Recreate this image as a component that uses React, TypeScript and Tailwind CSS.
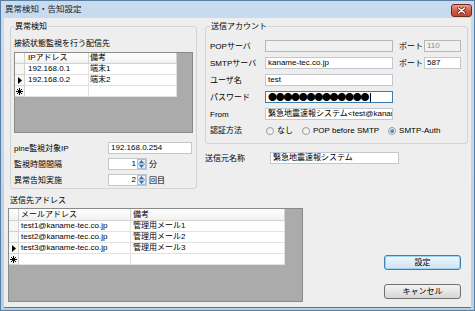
import React from 'react';

const FONT = "font-['Liberation_Sans','Noto_Sans_CJK_JP',sans-serif]";

function TextBox({
  children,
  className = '',
  disabled = false,
  focused = false,
}: {
  children?: React.ReactNode;
  className?: string;
  disabled?: boolean;
  focused?: boolean;
}) {
  const tone = disabled
    ? 'bg-[#f1f1f1] border-[#b7b7b7] text-[#8a8a8a]'
    : focused
      ? 'bg-white border-[#3d7bad]'
      : 'bg-white border-[#c3c8cf]';
  return (
    <div
      className={`h-[12px] flex items-center px-[2px] border text-[8px] leading-[10px] whitespace-nowrap overflow-hidden ${tone} ${className}`}
    >
      {children}
    </div>
  );
}

function Spinner({ value }: { value: string }) {
  return (
    <div className="h-[12px] w-[39px] flex border border-[#c3c8cf] bg-white">
      <div className="flex-1 text-right pr-[1px] text-[8px] leading-[10px]">{value}</div>
      <div className="w-[9px] flex flex-col">
        <div className="h-[5px] flex items-center justify-center border border-[#aac0d8] bg-linear-to-b from-[#f3f8fd] to-[#d6e5f4]">
          <svg width="5" height="3" viewBox="0 0 5 3">
            <polygon points="2.5,0 5,3 0,3" fill="#3e6fa3" />
          </svg>
        </div>
        <div className="h-[5px] flex items-center justify-center border border-[#aac0d8] bg-linear-to-b from-[#f3f8fd] to-[#d6e5f4]">
          <svg width="5" height="3" viewBox="0 0 5 3">
            <polygon points="0,0 5,0 2.5,3" fill="#3e6fa3" />
          </svg>
        </div>
      </div>
    </div>
  );
}

function RowArrow() {
  return (
    <svg width="4" height="7" viewBox="0 0 4 7">
      <polygon points="0,0 4,3.5 0,7" fill="#000" />
    </svg>
  );
}

function NewRowMark() {
  return (
    <svg width="7" height="7" viewBox="0 0 7 7" stroke="#000" strokeWidth="1">
      <line x1="3.5" y1="0" x2="3.5" y2="7" />
      <line x1="0" y1="3.5" x2="7" y2="3.5" />
      <line x1="1" y1="1" x2="6" y2="6" />
      <line x1="6" y1="1" x2="1" y2="6" />
    </svg>
  );
}

function Radio({ checked = false, label }: { checked?: boolean; label: string }) {
  return (
    <div className="flex items-center gap-[3px]">
      <div className="w-[8px] h-[8px] rounded-full border border-[#9a9a9a] bg-linear-to-br from-[#e6e6e6] to-[#ffffff] flex items-center justify-center">
        {checked && <div className="w-[4px] h-[4px] rounded-full bg-linear-to-br from-[#7fc3ee] to-[#1b5f93]" />}
      </div>
      <span className="text-[8px] leading-[10px]">{label}</span>
    </div>
  );
}

type Col = { title: string; w: string; pad: string };

function DataGrid({
  cols,
  rows,
  current,
  className,
  headH,
}: {
  cols: Col[];
  rows: string[][];
  current: number;
  className: string;
  headH: string;
}) {
  return (
    <div className={`border border-[#8a8a8a] bg-[#ababab] overflow-hidden ${className}`}>
      <div className={`flex ${headH}`}>
        <div className="w-[10px] border-r border-b border-[#d2d2d2] bg-linear-to-b from-white to-[#f1f1f1]" />
        {cols.map((c) => (
          <div
            key={c.title}
            className={`${c.w} ${c.pad} border-r border-b border-[#d2d2d2] bg-linear-to-b from-white to-[#f1f1f1] text-[8px] leading-[10px] flex items-center`}
          >
            {c.title}
          </div>
        ))}
      </div>
      {rows.map((r, i) => (
        <div key={i} className="flex h-[11px]">
          <div className="w-[10px] border-r border-b border-[#d2d2d2] bg-[#f7f7f7] flex items-center justify-center">
            {i === current && <RowArrow />}
          </div>
          {cols.map((c, j) => (
            <div
              key={j}
              className={`${c.w} ${c.pad} border-r border-b border-[#e2e2e2] bg-white text-[8px] leading-[10px] flex items-center whitespace-nowrap overflow-hidden`}
            >
              {r[j]}
            </div>
          ))}
        </div>
      ))}
      <div className="flex h-[11px]">
        <div className="w-[10px] border-r border-b border-[#d2d2d2] bg-[#f7f7f7] flex items-center justify-center">
          <NewRowMark />
        </div>
        {cols.map((c, j) => (
          <div key={j} className={`${c.w} border-r border-b border-[#e2e2e2] bg-white`} />
        ))}
      </div>
    </div>
  );
}

export default function App() {
  return (
    <div
      className={`w-[475px] h-[311px] flex flex-col border border-[#5b7fa3] bg-linear-to-b from-[#c9dbef] to-[#b9cfe7] text-black ${FONT}`}
    >
      {/* title bar */}
      <div className="h-[17px] flex items-center justify-between pl-[4px] pr-[2px]">
        <span className="text-[8.5px] leading-[11px] text-[#1b1b1b]">異常検知・告知設定</span>
        <div className="w-[21px] h-[13px] mt-[1px] rounded-[3px] border border-[#6e2b20] bg-linear-to-b from-[#e9a08f] via-[#d2604a] to-[#c0452f] flex items-center justify-center">
          <svg width="9" height="7" viewBox="0 0 9 7" strokeLinecap="round">
            <path d="M1.5 1 L7.5 6 M7.5 1 L1.5 6" stroke="#5a2018" strokeWidth="3" />
            <path d="M1.5 1 L7.5 6 M7.5 1 L1.5 6" stroke="#ffffff" strokeWidth="1.6" />
          </svg>
        </div>
      </div>

      {/* client area */}
      <div className="flex-1 mx-[3px] mb-[2px] bg-[#eeeeee] border-b border-[#2f8aa0] flex flex-col">
        <div className="flex pt-[3px] pl-[6px]">
          {/* 異常検知 */}
          <fieldset className="w-[187px] h-[168px] border border-[#d3d3d3] rounded-[3px] px-[3px]">
            <legend className="px-[1px] text-[8px] leading-[11px]">異常検知</legend>
            <div className="mt-[6px] text-[8px] leading-[11px]">接続状態監視を行う配信先</div>
            <DataGrid
              className="mt-[3px] w-[179px] h-[81px]"
              headH="h-[11px]"
              current={1}
              cols={[
                { title: 'IPアドレス', w: 'w-[64px]', pad: 'pl-[3px]' },
                { title: '備考', w: 'w-[88px]', pad: 'pl-[1px]' },
              ]}
              rows={[
                ['192.168.0.1', '端末1'],
                ['192.168.0.2', '端末2'],
              ]}
            />
            <div className="mt-[9px] flex flex-col gap-[4px]">
              <div className="flex items-center">
                <span className="w-[94px] text-[8px] leading-[11px]">pine監視対象IP</span>
                <TextBox className="w-[84px]">192.168.0.254</TextBox>
              </div>
              <div className="flex items-center">
                <span className="w-[94px] text-[8px] leading-[11px]">監視時間間隔</span>
                <Spinner value="1" />
                <span className="ml-[2px] text-[8px] leading-[11px]">分</span>
              </div>
              <div className="flex items-center">
                <span className="w-[94px] text-[8px] leading-[11px]">異常告知実施</span>
                <Spinner value="2" />
                <span className="ml-[2px] text-[8px] leading-[11px]">回目</span>
              </div>
            </div>
          </fieldset>

          <div className="ml-[8px] flex flex-col">
            {/* 送信アカウント */}
            <fieldset className="w-[263px] h-[123px] border border-[#d3d3d3] rounded-[3px] px-[4px]">
              <legend className="px-[1px] text-[8px] leading-[11px]">送信アカウント</legend>
              <div className="pt-[8px] flex flex-col gap-[5px]">
                <div className="flex items-center">
                  <span className="w-[55px] text-[8px] leading-[11px]">POPサーバ</span>
                  <TextBox className="w-[128px]" disabled />
                  <span className="ml-[6px] w-[25px] text-[8px] leading-[11px]">ポート</span>
                  <TextBox className="w-[37px]" disabled>110</TextBox>
                </div>
                <div className="flex items-center">
                  <span className="w-[55px] text-[8px] leading-[11px]">SMTPサーバ</span>
                  <TextBox className="w-[128px]">kaname-tec.co.jp</TextBox>
                  <span className="ml-[6px] w-[25px] text-[8px] leading-[11px]">ポート</span>
                  <TextBox className="w-[37px]">587</TextBox>
                </div>
                <div className="flex items-center">
                  <span className="w-[55px] text-[8px] leading-[11px]">ユーザ名</span>
                  <TextBox className="w-[128px]">test</TextBox>
                </div>
                <div className="flex items-center">
                  <span className="w-[55px] text-[8px] leading-[11px]">パスワード</span>
                  <TextBox className="w-[128px]" focused>
                    <span className="font-['Noto_Sans_CJK_JP',sans-serif] text-[9px] leading-[10px] tracking-[-1.3px]">●●●●●●●●●●●●●</span>
                    <span className="ml-[2px] w-[1px] h-[9px] bg-black" />
                  </TextBox>
                </div>
                <div className="flex items-center">
                  <span className="w-[55px] text-[8px] leading-[11px]">From</span>
                  <TextBox className="w-[128px]">緊急地震速報システム&lt;test@kaname</TextBox>
                </div>
              </div>
              <div className="mt-[5px] flex items-center">
                <span className="w-[56px] text-[8px] leading-[11px]">認証方法</span>
                <div className="flex items-center gap-[9px]">
                  <Radio label="なし" />
                  <Radio label="POP before SMTP" />
                  <Radio label="SMTP-Auth" checked />
                </div>
              </div>
            </fieldset>

            <div className="mt-[8px] flex items-center">
              <span className="w-[65px] text-[8px] leading-[11px]">送信元名称</span>
              <TextBox className="w-[129px]">緊急地震速報システム</TextBox>
            </div>
          </div>
        </div>

        {/* 送信先アドレス */}
        <div className="mt-[6px] pl-[6px] text-[8px] leading-[11px]">送信先アドレス</div>
        <div className="mt-[2px] pl-[4px] flex">
          <DataGrid
            className="w-[295px] h-[94px]"
            headH="h-[12px]"
            current={2}
            cols={[
              { title: 'メールアドレス', w: 'w-[112px]', pad: 'pl-[2px]' },
              { title: '備考', w: 'w-[154px]', pad: 'pl-[2px]' },
            ]}
            rows={[
              ['test1@kaname-tec.co.jp', '管理用メール1'],
              ['test2@kaname-tec.co.jp', '管理用メール2'],
              ['test3@kaname-tec.co.jp', '管理用メール3'],
            ]}
          />
          <div className="ml-[81px] pt-[47px] flex flex-col gap-[14px]">
            <button className="w-[77px] h-[15px] rounded-[3px] border border-[#3c7fb1] bg-linear-to-b from-[#f1f8fd] to-[#cfe3f1] text-[8px] leading-none shadow-[inset_0_0_0_1px_#9fd3f2]">
              設定
            </button>
            <button className="w-[77px] h-[15px] rounded-[3px] border border-[#707070] bg-linear-to-b from-[#f3f3f3] to-[#d6d6d6] text-[8px] leading-none">
              キャンセル
            </button>
          </div>
        </div>
      </div>
    </div>
  );
}
